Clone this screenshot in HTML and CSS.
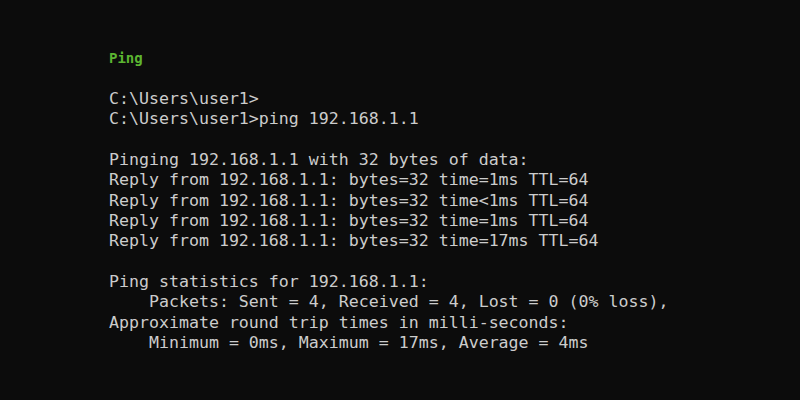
FILE: index.html
```html
<!DOCTYPE html>
<html>
<head>
<meta charset="utf-8">
<link rel="stylesheet" href="styles.css">
</head>
<body>
<main class="terminal">
<div class="title">Ping</div>
<pre class="output">

C:\Users\user1&gt;
C:\Users\user1&gt;ping 192.168.1.1

Pinging 192.168.1.1 with 32 bytes of data:
Reply from 192.168.1.1: bytes=32 time=1ms TTL=64
Reply from 192.168.1.1: bytes=32 time&lt;1ms TTL=64
Reply from 192.168.1.1: bytes=32 time=1ms TTL=64
Reply from 192.168.1.1: bytes=32 time=17ms TTL=64

Ping statistics for 192.168.1.1:
    Packets: Sent = 4, Received = 4, Lost = 0 (0% loss),
Approximate round trip times in milli-seconds:
    Minimum = 0ms, Maximum = 17ms, Average = 4ms</pre>
</main>
</body>
</html>
```
FILE: styles.css
```css
html, body {
  margin: 0;
  padding: 0;
  background: #0c0c0c;
  width: 800px;
  height: 400px;
  overflow: hidden;
}
.terminal {
  padding: 48px 0 0 109px;
  font-family: "DejaVu Sans Mono", "Liberation Mono", monospace;
  color: #cccccc;
}
.title {
  font-size: 14px;
  font-weight: bold;
  color: #5cb531;
  line-height: 20.36px;
  height: 20.36px;
}
.output {
  margin: 0;
  font-family: inherit;
  font-size: 16.6px;
  line-height: 20.36px;
  white-space: pre;
}
```
